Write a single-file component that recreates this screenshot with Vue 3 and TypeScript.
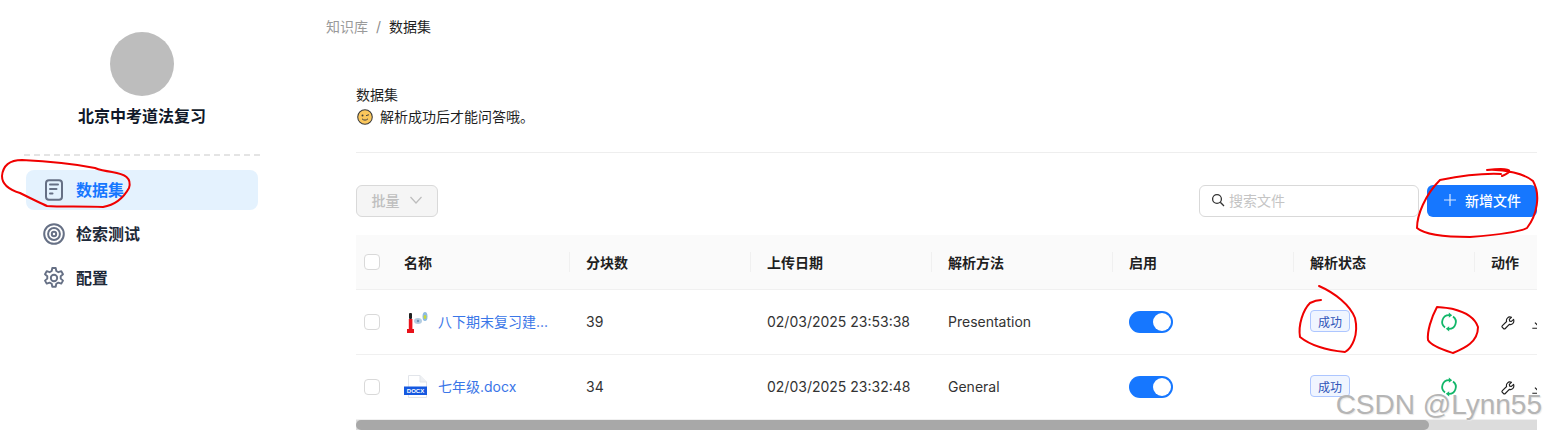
<template>
  <div class="page">
    <aside class="sidebar">
      <div class="avatar"></div>
      <div class="kb-name">北京中考道法复习</div>
      <div class="dash"></div>
      <nav class="menu">
        <div v-for="item in menu" :key="item.label" class="menu-item" :class="{ active: item.active }">
          <svg v-if="item.icon === 'doc'" class="menu-icon" viewBox="0 0 22 22" fill="none" stroke="#667085" stroke-width="2">
            <rect x="3" y="1.2" width="16" height="19.600" rx="3" />
            <path d="M7 5.500h8M7 10h6.500M7 14.500h2.500" stroke-linecap="round" />
          </svg>
          <svg v-else-if="item.icon === 'target'" class="menu-icon" viewBox="0 0 22 22" fill="none" stroke="#667085" stroke-width="2">
            <circle cx="11" cy="11" r="9.800" />
            <circle cx="11" cy="11" r="5.900" />
            <circle cx="11" cy="11" r="2.200" />
          </svg>
          <svg v-else class="menu-icon" viewBox="1 1 22 22" fill="none" stroke="#667085" stroke-width="1.900" stroke-linejoin="round">
            <path d="M10.300 2h3.400l.6 3 2.100 1.200 2.900-1 1.700 3-2.300 2v2.400l2.300 2-1.700 3-2.900-1-2.100 1.200-.6 3h-3.400l-.6-3-2.100-1.200-2.900 1-1.700-3 2.300-2v-2.400l-2.300-2 1.700-3 2.900 1 2.100-1.200z" />
            <circle cx="12" cy="12" r="3.200" />
          </svg>
          <span>{{ item.label }}</span>
        </div>
      </nav>
    </aside>

    <main class="main">
      <div class="crumbs">
        <span class="crumb-link">知识库</span>
        <span class="crumb-sep">/</span>
        <span>数据集</span>
      </div>

      <section class="panel">
        <div class="intro">
          <div>数据集</div>
          <div class="tip">
            <svg class="wink" viewBox="0 0 18 18">
              <circle cx="9" cy="9" r="8.200" fill="#fbc75c" stroke="#3c3c3c" stroke-width="1.200" />
              <circle cx="6.200" cy="7.200" r="1.100" fill="#3c3c3c" />
              <path d="M10.600 7.400l2.400-.8M6 11.400c1.600 1.600 4.400 1.600 6 0" fill="none" stroke="#3c3c3c" stroke-width="1.100" stroke-linecap="round" />
            </svg>
            <span>解析成功后才能问答哦。</span>
          </div>
        </div>

        <div class="toolbar">
          <button class="batch">
            批量
            <svg width="14" height="14" viewBox="0 0 14 14" fill="none" stroke="#bdbdbd" stroke-width="1.200"><path d="M1.500 4l5.500 6 5.500-6" /></svg>
          </button>
          <div class="toolbar-right">
            <div class="search">
              <svg width="14" height="14" viewBox="0 0 14 14" fill="none" stroke="#333" stroke-width="1.300"><circle cx="6" cy="6" r="4.400" /><path d="M9.300 9.300l3.700 3.700" /></svg>
              <span>搜索文件</span>
            </div>
            <button class="add">
              <svg width="14" height="14" viewBox="0 0 14 14" stroke="#fff" stroke-width="1.200" opacity=".85"><path d="M7 1v12M1 7h12" /></svg>
              新增文件
            </button>
          </div>
        </div>

        <div class="table">
          <div class="row head">
            <div class="cell check"><i class="box"></i></div>
            <div v-for="col in columns" :key="col" class="cell th">{{ col }}</div>
          </div>
          <div v-for="row in rows" :key="row.name" class="row">
            <div class="cell check"><i class="box"></i></div>
            <div class="cell name">
              <svg v-if="row.type === 'ppt'" class="file" viewBox="0 0 26 26">
                <rect x="5" y="4" width="3" height="6" rx="1" fill="#222" />
                <rect x="4.800" y="10" width="3.600" height="10" fill="#e8121a" />
                <rect x="3" y="20" width="7" height="4" fill="#e8121a" />
                <ellipse cx="14" cy="12" rx="4" ry="3" fill="#b4cde2" />
                <circle cx="14" cy="12" r="1.200" fill="#6d93b5" />
                <ellipse cx="21" cy="7.500" rx="2.500" ry="4.500" fill="#8fbbe0" />
                <ellipse cx="21" cy="8" rx="1.400" ry="2" fill="#c9d93a" />
              </svg>
              <svg v-else class="file" viewBox="0 0 26 26">
                <path d="M4.500 1.500H16l6.500 6.500v15.500H4.500z" fill="#fff" stroke="#e2e5ea" />
                <path d="M16 1.500V8h6.500" fill="#eef0f3" stroke="#e2e5ea" />
                <rect x="0" y="12.500" width="23" height="8.500" fill="#1558e0" />
                <text x="11.500" y="19" class="docx-label">DOCX</text>
              </svg>
              <span class="file-name">{{ row.name }}</span>
            </div>
            <div class="cell">{{ row.chunks }}</div>
            <div class="cell">{{ row.date }}</div>
            <div class="cell">{{ row.method }}</div>
            <div class="cell"><span class="switch"><i></i></span></div>
            <div class="cell status">
              <span class="tag">成功</span>
              <svg class="sync" viewBox="0 0 18 18" fill="none" stroke="#12b76a" stroke-width="1.800">
                <path d="M5 14.500A6.800 6.800 0 0 1 9.200 2.200" />
                <path d="M13 3.500A6.800 6.800 0 0 1 8.800 15.800" />
                <path d="M8.800 -.4l3.400 2.600-3.400 2.600z" fill="#12b76a" stroke="none" />
                <path d="M9.200 13.200l-3.400 2.600 3.400 2.600z" fill="#12b76a" stroke="none" />
              </svg>
            </div>
            <div class="cell actions">
              <svg class="wrench" viewBox="0 0 16 16" fill="none" stroke="#1f1f1f" stroke-width="1.300" stroke-linejoin="round">
                <path d="M14.400 3.800l-2.500 2.400-2-.4-.4-2 2.400-2.400c-1.600-.6-3.500-.2-4.600 1-1 1-1.300 2.500-.9 3.900L1.600 11c-.6.600-.6 1.500 0 2.100l1.200 1.200c.6.600 1.500.6 2.100 0l4.600-4.700c1.400.4 2.900.1 3.900-.9 1.200-1.100 1.500-3.200 1-4.900z" />
              </svg>
              <svg class="download" viewBox="0 0 16 16" fill="none" stroke="#1f1f1f" stroke-width="1.300">
                <path d="M8 1.500v9M4.500 7.500L8 11l3.500-3.500M1.500 14h13" />
              </svg>
            </div>
          </div>
          <div class="scroll"><div class="thumb"></div></div>
        </div>
      </section>
    </main>

    <svg class="marks" viewBox="0 0 1547 432" fill="none" stroke="#f00000" stroke-width="2" stroke-linecap="round" stroke-linejoin="round">
      <path d="M95 168C75 164 45 161 22 160C10 160 3 165 2 176C2 185 10 190 20 193C32 199 40 203 47 206C60 207 85 206 103 207C115 205 124 197 129 188C132 178 125 174 112 172C105 171 100 170 95 168Z" />
      <path d="M1487 170C1505 168 1518 169 1502 176M1501 174C1480 173 1460 176 1440 180C1425 195 1417 215 1417 228C1425 235 1450 237 1470 237C1495 235 1520 232 1527 228C1537 215 1541 195 1533 181C1525 174 1505 169 1487 170" />
      <path d="M1319 286C1335 293 1350 305 1355 318C1359 335 1352 348 1345 352C1325 350 1310 345 1300 337C1298 325 1303 310 1310 303C1314 301 1318 300 1321 300" />
      <path d="M1437 307C1431 318 1427 332 1428 340C1432 347 1450 352 1453 353C1465 348 1478 342 1478 327C1475 318 1465 312 1453 309C1447 308 1442 307 1437 307Z" />
    </svg>
    <div class="watermark">CSDN @Lynn55</div>
  </div>
</template>

<script setup lang="ts">
interface FileRow {
  name: string;
  type: "ppt" | "docx";
  chunks: number;
  date: string;
  method: string;
}

const menu = [
  { label: "数据集", icon: "doc", active: true },
  { label: "检索测试", icon: "target", active: false },
  { label: "配置", icon: "gear", active: false },
];

const columns = ["名称", "分块数", "上传日期", "解析方法", "启用", "解析状态", "动作"];

const rows: FileRow[] = [
  { name: "八下期末复习建...", type: "ppt", chunks: 39, date: "02/03/2025 23:53:38", method: "Presentation" },
  { name: "七年级.docx", type: "docx", chunks: 34, date: "02/03/2025 23:32:48", method: "General" },
];
</script>

<style>
html,
body {
  margin: 0;
  background: #fff;
  overflow: hidden;
}
</style>

<style scoped>
.page {
  position: relative;
  display: flex;
  width: 1547px;
  height: 432px;
  overflow: hidden;
  font-family: Inter, "Noto Sans CJK SC", sans-serif;
  font-size: 14px;
  color: #1f1f1f;
  background: #fff;
}

.sidebar {
  width: 284px;
  flex: none;
  box-sizing: border-box;
  padding: 32px 26px 0;
  display: flex;
  flex-direction: column;
  align-items: center;
}

.avatar {
  width: 64px;
  height: 64px;
  border-radius: 50%;
  background: #bdbdbd;
}

.kb-name {
  margin-top: 8px;
  line-height: 24px;
  font-size: 16px;
  font-weight: 600;
  color: #101828;
}

.dash {
  width: 236px;
  margin-top: 26px;
  border-top: 2px dashed #e4e4e4;
}

.menu {
  width: 232px;
  margin-top: 14px;
  display: flex;
  flex-direction: column;
  gap: 4px;
}

.menu-item {
  height: 40px;
  box-sizing: border-box;
  display: flex;
  align-items: center;
  gap: 11px;
  padding: 0 0 2px 17px;
  border-radius: 8px;
  font-size: 16px;
  font-weight: 600;
  color: #1d2939;
}

.menu-item.active {
  background: #e4f2fe;
  color: #1677ff;
}

.menu-icon {
  width: 22px;
  height: 22px;
  margin-top: 2px;
}

.main {
  flex: 1;
  min-width: 0;
  padding-left: 42px;
}

.crumbs {
  height: 52px;
  display: flex;
  align-items: center;
  gap: 8px;
  font-size: 14px;
  color: #1f1f1f;
}

.crumb-link {
  color: #9a9a9a;
}

.crumb-sep {
  color: #8c8c8c;
}

.panel {
  margin-left: 30px;
  width: 1181px;
}

.intro {
  height: 101px;
  box-sizing: border-box;
  padding-top: 32px;
  border-bottom: 1px solid #eeeeee;
  line-height: 22px;
  font-size: 14px;
}

.tip {
  display: flex;
  align-items: center;
  gap: 7px;
  padding-left: 1px;
}

.wink {
  width: 16px;
  height: 16px;
}

.toolbar {
  margin-top: 32px;
  display: flex;
  justify-content: space-between;
}

.toolbar-right {
  display: flex;
  gap: 8px;
}

.batch,
.add {
  height: 32px;
  box-sizing: border-box;
  padding: 0 0 2px;
  border-radius: 6px;
  font: inherit;
  display: flex;
  align-items: center;
  justify-content: center;
}

.batch {
  width: 82px;
  gap: 9px;
  background: #f5f5f5;
  border: 1px solid #d9d9d9;
  color: #bfbfbf;
  font-weight: 500;
}

.add {
  width: 110px;
  gap: 8px;
  border: none;
  background: #1677ff;
  color: #fff;
  font-weight: 500;
}

.search {
  width: 220px;
  height: 32px;
  box-sizing: border-box;
  display: flex;
  align-items: center;
  gap: 4px;
  padding: 0 0 2px 11px;
  border: 1px solid #d9d9d9;
  border-radius: 6px;
  color: #c4c4c4;
}

.table {
  margin-top: 18px;
}

.row {
  display: grid;
  grid-template-columns: 32px 182px 181px 181px 181px 181px 181px 62px;
  height: 65px;
  border-bottom: 1px solid #f0f0f0;
  box-sizing: border-box;
  overflow: hidden;
}

.row.head {
  height: 55px;
  background: #fafafa;
}

.cell {
  display: flex;
  align-items: center;
  box-sizing: border-box;
  padding: 0 0 2px 16px;
  min-width: 0;
  color: #333;
}

.cell.check {
  padding: 0 0 0 8px;
}

.box {
  width: 16px;
  height: 16px;
  box-sizing: border-box;
  border: 1px solid #d9d9d9;
  border-radius: 4px;
  background: #fff;
}

.th {
  position: relative;
  font-weight: 600;
  color: #1f1f1f;
}

.head .cell {
  padding-bottom: 0;
}

.th:not(:last-child)::after {
  content: "";
  position: absolute;
  right: 0;
  top: 17px;
  height: 20px;
  border-right: 1px solid #f0f0f0;
}

.name {
  gap: 8px;
}

.file {
  width: 26px;
  height: 26px;
  flex: none;
  margin-top: 2px;
}

.docx-label {
  font-family: "Liberation Sans", sans-serif;
  font-size: 6px;
  font-weight: 700;
  text-anchor: middle;
  fill: #fff;
}

.file-name {
  color: #3a76e8;
  white-space: nowrap;
}

.tag {
  width: 40px;
  height: 22px;
  box-sizing: border-box;
  display: flex;
  align-items: center;
  justify-content: center;
  background: #f0f5ff;
  border: 1px solid #adc6ff;
  border-radius: 4px;
  color: #2f54b8;
  font-size: 12px;
}

.sync {
  width: 18px;
  height: 18px;
  margin-left: 90px;
  margin-top: 2px;
  overflow: visible;
}

.switch {
  width: 44px;
  height: 22px;
  margin-top: 2px;
  border-radius: 11px;
  background: #1677ff;
  position: relative;
  display: block;
}

.switch i {
  position: absolute;
  top: 2px;
  right: 2px;
  width: 18px;
  height: 18px;
  border-radius: 50%;
  background: #fff;
}

.actions {
  padding-left: 26px;
  gap: 16px;
  overflow: hidden;
}

.wrench,
.download {
  width: 14px;
  height: 14px;
  flex: none;
  margin-top: 4px;
}

.scroll {
  height: 10px;
  background: #dcdcdc;
}

.thumb {
  width: 1073px;
  height: 10px;
  border-radius: 5px;
  background: #a8a8a8;
}

.marks {
  position: absolute;
  inset: 0;
  width: 1547px;
  height: 432px;
  pointer-events: none;
}

.watermark {
  position: absolute;
  right: 5px;
  top: 391px;
  font-family: "Liberation Sans", sans-serif;
  font-size: 28px;
  line-height: 28px;
  color: #b5b5b5;
  text-shadow: 1px 1px 1px #e8e8e8;
  white-space: nowrap;
}
</style>
